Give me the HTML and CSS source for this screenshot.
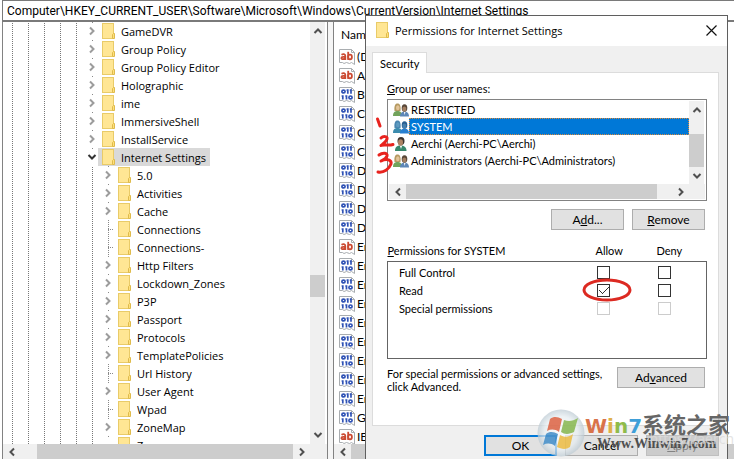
FILE: index.html
```html
<!DOCTYPE html>
<html lang="en">
<head>
    <meta charset="UTF-8">
    <meta name="viewport" content="width=device-width, initial-scale=1.0">
    <title>Registry Editor</title>
    <link rel="stylesheet" href="styles.css">
</head>
<body>

<!-- Shared icons -->
<svg class="sprite" aria-hidden="true">
    <symbol id="folder" viewBox="0 0 13 16">
        <rect x="0.5" y="0.5" width="11" height="15" fill="#ffe694" stroke="#e9cb68"/>
        <path d="M10.5 15.5V11.5l1-1h1v5z" fill="#ffe07c" stroke="#dfbb4c"/>
    </symbol>
    <symbol id="right" viewBox="0 0 8 10">
        <path d="M2 1.5L5.5 5L2 8.5" fill="none" stroke="currentColor" stroke-width="2"/>
    </symbol>
    <symbol id="left" viewBox="0 0 8 10">
        <path d="M6 1.5L2.5 5L6 8.5" fill="none" stroke="currentColor" stroke-width="2"/>
    </symbol>
    <symbol id="up" viewBox="0 0 10 8">
        <path d="M1.5 6L5 2.5L8.5 6" fill="none" stroke="currentColor" stroke-width="2"/>
    </symbol>
    <symbol id="down" viewBox="0 0 10 8">
        <path d="M1.5 2L5 5.5L8.5 2" fill="none" stroke="currentColor" stroke-width="2"/>
    </symbol>
    <symbol id="page" viewBox="0 0 16 16">
        <path d="M0.5 0.5H12.5L15.5 3.5V15.5L12.5 13.5L10.5 14.5L7.5 13.5L5 14.5L3.5 13.5H0.5Z" fill="#fff" stroke="#a9adb0"/>
        <path d="M12.5 0.5V3.5H15.5" fill="none" stroke="#a9adb0"/>
    </symbol>
    <symbol id="string" viewBox="0 0 16 16">
        <use href="#page"/>
        <g fill="none" stroke="#cb4a32" stroke-width="1.8">
            <path d="M2.5 5.8C4 4.8 6.3 4.9 6.3 7V11M6.3 7.8H4.2C1.8 7.8 1.8 10.3 4 10.2C5.5 10.2 6.3 9.2 6.3 8.5"/>
            <path d="M9.2 2.8V11"/>
            <ellipse cx="11" cy="8" rx="1.9" ry="2.3"/>
        </g>
    </symbol>
    <symbol id="binary" viewBox="0 0 16 16">
        <use href="#page"/>
        <g fill="none" stroke="#2f52b5" stroke-width="1.7">
            <ellipse cx="4.5" cy="4.5" rx="1.6" ry="1.4"/>
            <path d="M8.8 2.3V6.7M7.6 3.2h1M12 2.3V6.7M10.8 3.2h1"/>
            <path d="M3.8 8.2V12.6M2.6 9h1M7.5 8.2V12.6M6.3 9h1"/>
            <ellipse cx="11.5" cy="10.4" rx="1.6" ry="1.4"/>
        </g>
    </symbol>
    <symbol id="group" viewBox="0 0 16 14">
        <path d="M0 13C0 9 2 8 4.5 8S9 9 9 13Z" fill="#72a35b"/>
        <path d="M1.5 8C1 3 2 0.5 4.5 0.5S8 3 7.5 8Z" fill="#b59a62"/>
        <ellipse cx="4.8" cy="4.8" rx="1.8" ry="2.5" fill="#e3c499"/>
        <path d="M7 13.5C7 10 9 8.5 11.5 8.5S16 10 16 13.5Z" fill="#5d87b7"/>
        <ellipse cx="11.5" cy="5" rx="2.8" ry="3.8" fill="#594839"/>
        <ellipse cx="11.3" cy="6" rx="2" ry="2.6" fill="#a37f62"/>
        <path d="M11 9L11.5 12L12.5 9Z" fill="#fff"/>
    </symbol>
    <symbol id="group-selected" viewBox="0 0 16 14">
        <path d="M0 13C0 9 2 8 4.5 8S9 9 9 13Z" fill="#3c8cae"/>
        <path d="M1.5 8C1 3 2 0.5 4.5 0.5S8 3 7.5 8Z" fill="#4a86b0"/>
        <ellipse cx="4.8" cy="4.8" rx="1.8" ry="2.5" fill="#5f9bc0"/>
        <path d="M7 13.5C7 10 9 8.5 11.5 8.5S16 10 16 13.5Z" fill="#287fd0"/>
        <ellipse cx="11.5" cy="5" rx="2.8" ry="3.8" fill="#295f90"/>
        <ellipse cx="11.3" cy="6" rx="2" ry="2.6" fill="#4880ad"/>
    </symbol>
    <symbol id="user" viewBox="0 0 16 14">
        <path d="M2 14C2 10 4 8.5 7.5 8.5S13.5 10 13.5 14Z" fill="#37876c"/>
        <ellipse cx="8" cy="4" rx="3.5" ry="4" fill="#3d352f"/>
        <ellipse cx="7.5" cy="5.5" rx="2.5" ry="3.2" fill="#ae8465"/>
        <path d="M7 9L8 12L9 9Z" fill="#fff"/>
    </symbol>
</svg>

<div class="window">
    <input class="address" type="text" aria-label="Address" value="Computer\HKEY_CURRENT_USER\Software\Microsoft\Windows\CurrentVersion\Internet Settings">

    <div class="panes">
        <!-- Key tree -->
        <div class="pane tree-pane">
            <div class="pane-row">
                <ul class="tree">
                    <li><span class="guides"></span><span class="expander"><svg><use href="#right"/></svg></span><span class="key"><svg><use href="#folder"/></svg>GameDVR</span></li>
                    <li><span class="guides"></span><span class="expander"><svg><use href="#right"/></svg></span><span class="key"><svg><use href="#folder"/></svg>Group Policy</span></li>
                    <li><span class="guides"></span><span class="expander"><svg><use href="#right"/></svg></span><span class="key"><svg><use href="#folder"/></svg>Group Policy Editor</span></li>
                    <li><span class="guides"></span><span class="expander"><svg><use href="#right"/></svg></span><span class="key"><svg><use href="#folder"/></svg>Holographic</span></li>
                    <li><span class="guides"></span><span class="expander"><svg><use href="#right"/></svg></span><span class="key"><svg><use href="#folder"/></svg>ime</span></li>
                    <li><span class="guides"></span><span class="expander"><svg><use href="#right"/></svg></span><span class="key"><svg><use href="#folder"/></svg>ImmersiveShell</span></li>
                    <li><span class="guides"></span><span class="expander"><svg><use href="#right"/></svg></span><span class="key"><svg><use href="#folder"/></svg>InstallService</span></li>
                    <li><span class="guides"></span><span class="expander open"><svg><use href="#down"/></svg></span><span class="key selected"><svg><use href="#folder"/></svg>Internet Settings</span></li>
                    <li class="child"><span class="guides"></span><span class="expander"><svg><use href="#right"/></svg></span><span class="key"><svg><use href="#folder"/></svg>5.0</span></li>
                    <li class="child"><span class="guides"></span><span class="expander"><svg><use href="#right"/></svg></span><span class="key"><svg><use href="#folder"/></svg>Activities</span></li>
                    <li class="child"><span class="guides"></span><span class="expander"><svg><use href="#right"/></svg></span><span class="key"><svg><use href="#folder"/></svg>Cache</span></li>
                    <li class="child"><span class="guides"></span><span class="leaf"></span><span class="key"><svg><use href="#folder"/></svg>Connections</span></li>
                    <li class="child"><span class="guides"></span><span class="leaf"></span><span class="key"><svg><use href="#folder"/></svg>Connections-</span></li>
                    <li class="child"><span class="guides"></span><span class="expander"><svg><use href="#right"/></svg></span><span class="key"><svg><use href="#folder"/></svg>Http Filters</span></li>
                    <li class="child"><span class="guides"></span><span class="expander"><svg><use href="#right"/></svg></span><span class="key"><svg><use href="#folder"/></svg>Lockdown_Zones</span></li>
                    <li class="child"><span class="guides"></span><span class="expander"><svg><use href="#right"/></svg></span><span class="key"><svg><use href="#folder"/></svg>P3P</span></li>
                    <li class="child"><span class="guides"></span><span class="expander"><svg><use href="#right"/></svg></span><span class="key"><svg><use href="#folder"/></svg>Passport</span></li>
                    <li class="child"><span class="guides"></span><span class="expander"><svg><use href="#right"/></svg></span><span class="key"><svg><use href="#folder"/></svg>Protocols</span></li>
                    <li class="child"><span class="guides"></span><span class="expander"><svg><use href="#right"/></svg></span><span class="key"><svg><use href="#folder"/></svg>TemplatePolicies</span></li>
                    <li class="child"><span class="guides"></span><span class="leaf"></span><span class="key"><svg><use href="#folder"/></svg>Url History</span></li>
                    <li class="child"><span class="guides"></span><span class="expander"><svg><use href="#right"/></svg></span><span class="key"><svg><use href="#folder"/></svg>User Agent</span></li>
                    <li class="child"><span class="guides"></span><span class="leaf"></span><span class="key"><svg><use href="#folder"/></svg>Wpad</span></li>
                    <li class="child"><span class="guides"></span><span class="expander"><svg><use href="#right"/></svg></span><span class="key"><svg><use href="#folder"/></svg>ZoneMap</span></li>
                    <li class="child"><span class="guides"></span><span class="expander"></span><span class="key"><svg><use href="#folder"/></svg>Zones</span></li>
                </ul>
                <div class="scroll-v tree-scroll">
                    <button type="button" aria-label="Scroll up"><svg class="v"><use href="#up"/></svg></button>
                    <div class="track"><div class="thumb"></div></div>
                    <button type="button" aria-label="Scroll down"><svg class="v"><use href="#down"/></svg></button>
                </div>
            </div>
            <div class="scroll-h tree-scroll-h">
                <button type="button" aria-label="Scroll left"><svg><use href="#left"/></svg></button>
                <div class="thumb"></div>
                <button type="button" aria-label="Scroll right"><svg><use href="#right"/></svg></button>
            </div>
        </div>

        <!-- Values -->
        <div class="pane values-pane">
            <div class="values">
                <div class="values-head">Nam</div>
                <ul>
                    <li><svg><use href="#string"/></svg>(D</li>
                    <li><svg><use href="#string"/></svg>Ac</li>
                    <li><svg><use href="#binary"/></svg>Ba</li>
                    <li><svg><use href="#binary"/></svg>Ce</li>
                    <li><svg><use href="#binary"/></svg>Ce</li>
                    <li><svg><use href="#binary"/></svg>Ce</li>
                    <li><svg><use href="#binary"/></svg>Di</li>
                    <li><svg><use href="#binary"/></svg>Di</li>
                    <li><svg><use href="#binary"/></svg>Di</li>
                    <li><svg><use href="#binary"/></svg>Di</li>
                    <li><svg><use href="#string"/></svg>En</li>
                    <li><svg><use href="#binary"/></svg>En</li>
                    <li><svg><use href="#binary"/></svg>En</li>
                    <li><svg><use href="#binary"/></svg>En</li>
                    <li><svg><use href="#binary"/></svg>En</li>
                    <li><svg><use href="#binary"/></svg>En</li>
                    <li><svg><use href="#binary"/></svg>En</li>
                    <li><svg><use href="#binary"/></svg>En</li>
                    <li><svg><use href="#binary"/></svg>En</li>
                    <li><svg><use href="#binary"/></svg>Gl</li>
                    <li><svg><use href="#string"/></svg>IE</li>
                </ul>
            </div>
            <div class="scroll-h">
                <button type="button" aria-label="Scroll left"><svg><use href="#left"/></svg></button>
                <div class="thumb"></div>
            </div>
        </div>
    </div>
</div>

<!-- Permissions dialog -->
<form class="dialog">
    <div class="title">
        <svg class="title-icon"><use href="#folder"/></svg>
        <h1>Permissions for Internet Settings</h1>
        <button type="button" class="close" aria-label="Close">
            <svg viewBox="0 0 11 11"><path d="M0.5 0.5L10.5 10.5M10.5 0.5L0.5 10.5" stroke="#111" stroke-width="1.2"/></svg>
        </button>
    </div>
    <div class="dialog-body">
        <button type="button" class="tab">Security</button>
        <div class="panel">
            <div class="label" id="groups"><u>G</u>roup or user names:</div>
            <div class="listbox">
                <div class="list-row">
                    <ul role="listbox" aria-labelledby="groups">
                        <li role="option"><svg><use href="#group"/></svg><span>RESTRICTED</span></li>
                        <li role="option" aria-selected="true" class="selected"><svg><use href="#group-selected"/></svg><span>SYSTEM</span></li>
                        <li role="option"><svg><use href="#user"/></svg><span>Aerchi (Aerchi-PC\Aerchi)</span></li>
                        <li role="option"><svg><use href="#group"/></svg><span>Administrators (Aerchi-PC\Administrators)</span></li>
                    </ul>
                    <div class="scroll-v list-scroll">
                        <button type="button" aria-label="Scroll up"><svg class="v"><use href="#up"/></svg></button>
                        <div class="track"><div class="thumb"></div></div>
                        <button type="button" aria-label="Scroll down"><svg class="v"><use href="#down"/></svg></button>
                    </div>
                </div>
                <div class="scroll-h list-scroll-h">
                    <button type="button" aria-label="Scroll left"><svg><use href="#left"/></svg></button>
                    <div class="thumb"></div>
                    <button type="button" aria-label="Scroll right"><svg><use href="#right"/></svg></button>
                </div>
            </div>
            <div class="list-buttons">
                <button type="button" class="btn">A<u>d</u>d...</button>
                <button type="button" class="btn"><u>R</u>emove</button>
            </div>

            <table class="permissions">
                <thead>
                    <tr><th scope="col"><u>P</u>ermissions for SYSTEM</th><th scope="col">Allow</th><th scope="col">Deny</th></tr>
                </thead>
                <tbody>
                    <tr>
                        <td>Full Control</td>
                        <td><input type="checkbox" aria-label="Allow full control"></td>
                        <td><input type="checkbox" aria-label="Deny full control"></td>
                    </tr>
                    <tr>
                        <td>Read</td>
                        <td><input type="checkbox" aria-label="Allow read" checked></td>
                        <td><input type="checkbox" aria-label="Deny read"></td>
                    </tr>
                    <tr>
                        <td>Special permissions</td>
                        <td><input type="checkbox" aria-label="Allow special permissions" disabled></td>
                        <td><input type="checkbox" aria-label="Deny special permissions" disabled></td>
                    </tr>
                </tbody>
            </table>

            <div class="advanced">
                <p>For special permissions or advanced settings,<br>click Advanced.</p>
                <button type="button" class="btn wide">Ad<u>v</u>anced</button>
            </div>
        </div>
        <div class="actions">
            <button type="submit" class="btn default">OK</button>
            <button type="button" class="btn">Cancel</button>
            <button type="button" class="btn" disabled><u>A</u>pply</button>
        </div>
    </div>

    <!-- Red pen marks -->
    <svg class="marks" viewBox="0 0 22 60" aria-hidden="true">
        <g fill="none" stroke="#e8231e" stroke-width="3" stroke-linecap="round" stroke-linejoin="round">
            <path d="M3.5 4L6 11"/>
            <path d="M7 23C9 21 14 21 13 24C12 27 9 29 7 30.5C10 29 14 31 19 29.5"/>
            <path d="M5 40C9 37 14 38 13 41C12 44 9 45 7 46C13 43 18 45 17 49C15 54 10 58 4 57"/>
        </g>
    </svg>
    <svg class="circle" viewBox="0 0 50 24" aria-hidden="true">
        <ellipse cx="25" cy="12" rx="23" ry="10" fill="none" stroke="#dc2a22" stroke-width="3"/>
    </svg>
</form>

<!-- Site watermark -->
<div class="watermark">
    <svg viewBox="0 0 48 48" aria-hidden="true">
        <defs>
            <radialGradient id="orb" cx="0.5" cy="0.5" r="0.5">
                <stop offset="0" stop-color="#fff"/>
                <stop offset="0.7" stop-color="#e6edf1"/>
                <stop offset="1" stop-color="#bccad3"/>
            </radialGradient>
        </defs>
        <circle cx="24" cy="24" r="23.5" fill="url(#orb)" opacity="0.8"/>
        <path d="M13 10C17 7 21 8 25 10L22 23C18 20 14 20 10 22Z" fill="#dd6a4c"/>
        <path d="M27 11C32 13 36 12 41 9L37 23C33 25 28 26 24 23Z" fill="#8cba58"/>
        <path d="M9 25C13 22 17 23 21 25L18 37C14 34 10 34 6 36Z" fill="#4b93cb"/>
        <path d="M23 26C28 29 32 28 36 25L33 38C29 41 24 40 20 38Z" fill="#edbf4d"/>
    </svg>
    <div class="watermark-text">
        <div class="brand"><span class="latin"><span class="w">W</span><span class="i">i</span><span class="n">n</span><span class="seven">7</span></span>系统之家</div>
        <div class="site">Www.Winwin7.com</div>
    </div>
    <div class="blog">https://aerch</div>
</div>

</body>
</html>
```
FILE: styles.css
```css
* {
    box-sizing: border-box;
}

body {
    margin: 0;
    height: 100vh;
    overflow: hidden;
    position: relative;
    background-color: #ffffff;
    color: #000000;
    font-family: "Open Sans", "Segoe UI", sans-serif;
    font-size: 11px;
}

button, input {
    font: inherit;
    color: inherit;
}

ul {
    list-style: none;
    margin: 0;
    padding: 0;
}

svg {
    display: block;
    flex: none;
}

.sprite {
    position: absolute;
    width: 0;
    height: 0;
}

/* Registry window */
.window {
    display: flex;
    flex-direction: column;
    height: 100%;
    padding-left: 2px;
}

.address {
    flex: none;
    width: 100%;
    height: 22px;
    padding: 0 4px;
    border: 1px solid #7a7a7a;
    border-right: none;
    border-bottom-width: 2px;
    font-family: Roboto, sans-serif;
    font-size: 12px;
    outline: none;
}

.panes {
    display: flex;
    flex: 1;
    min-height: 0;
    gap: 5px;
    background-color: #f5f5f5;
}

.pane {
    display: flex;
    flex-direction: column;
    min-height: 0;
    background-color: #ffffff;
    border-left: 1px solid #828282;
}

.tree-pane {
    width: 326px;
    flex: none;
    border-right: 1px solid #828282;
}

.values-pane {
    flex: 1;
}

.pane-row {
    display: flex;
    flex: 1;
    min-height: 0;
}

/* Tree */
.tree {
    flex: 1;
    padding-left: 1px;
    overflow: hidden;
}

.tree li {
    display: flex;
    height: 18px;
}

.guides {
    width: 80px;
    background-image:
        linear-gradient(#ffffff 1px, transparent 1px),
        linear-gradient(90deg, transparent 8px, #777777 8px, #777777 9px, transparent 9px);
    background-size: 100% 2px, 16px 100%;
}

.child .guides {
    width: 96px;
}

.expander {
    display: flex;
    justify-content: center;
    align-items: center;
    width: 14px;
    padding-left: 2px;
    color: #9c9c9c;
    background: linear-gradient(#888888, #888888) 8px 0 / 1px 1px no-repeat;
}

.expander svg {
    width: 8px;
    height: 10px;
}

.expander.open {
    color: #333333;
}

.expander.open svg {
    width: 10px;
    height: 8px;
}

.leaf {
    width: 14px;
    background-image:
        repeating-linear-gradient(#888888 0 1px, transparent 1px 2px),
        repeating-linear-gradient(90deg, #888888 0 1px, transparent 1px 2px);
    background-position: 8px 0, 8px 9px;
    background-size: 1px 100%, 6px 1px;
    background-repeat: no-repeat;
}

.key {
    display: flex;
    align-items: center;
    gap: 6px;
    padding: 0 4px;
    white-space: nowrap;
}

.key svg {
    width: 13px;
    height: 16px;
}

.key.selected {
    background-color: #d9d9d9;
}

/* Scroll bars */
.scroll-v, .scroll-h {
    display: flex;
    flex: none;
    background-color: #f0f0f0;
    color: #505050;
}

.scroll-v {
    flex-direction: column;
    width: 15px;
}

.scroll-h {
    height: 15px;
}

.scroll-v button, .scroll-h button {
    display: flex;
    flex: none;
    justify-content: center;
    align-items: center;
    width: 15px;
    height: 15px;
    padding: 0;
    border: none;
    background: none;
}

.scroll-v svg, .scroll-h svg {
    width: 8px;
    height: 10px;
}

.scroll-v svg.v {
    width: 10px;
    height: 8px;
}

.scroll-v button {
    height: 18px;
}

.scroll-h button {
    width: 17px;
}

.track {
    display: flex;
    flex: 1;
    flex-direction: column;
    justify-content: flex-end;
}

.thumb {
    background-color: #cdcdcd;
}

.scroll-h .thumb {
    flex: 1;
}

.tree-scroll {
    margin-right: 2px;
}

.tree-scroll .thumb {
    height: 22px;
    margin-bottom: 129px;
}

.tree-scroll-h {
    padding-right: 17px;
}

.tree-scroll-h button:first-child {
    margin-right: 17px;
}

/* Values */
.values {
    flex: 1;
    min-height: 0;
    overflow: hidden;
    font-family: Lato, sans-serif;
    font-size: 12px;
}

.values-head {
    height: 25px;
    padding-left: 7px;
    line-height: 26px;
}

.values li {
    display: flex;
    align-items: center;
    gap: 2px;
    height: 19px;
    padding-left: 5px;
}

.values svg {
    width: 16px;
    height: 16px;
}

/* Dialog */
.dialog {
    position: absolute;
    top: 15px;
    bottom: 0;
    left: 365px;
    width: 363px;
    background-color: #f0f0f0;
    border: 1px solid #5f5f5f;
    border-bottom: none;
    font-family: Lato, sans-serif;
}

.title {
    display: flex;
    align-items: center;
    gap: 6px;
    height: 30px;
    padding: 0 10px 2px;
    background-color: #ffffff;
}

.title-icon {
    width: 13px;
    height: 16px;
}

h1 {
    flex: 1;
    margin: 0;
    font-family: "Open Sans", sans-serif;
    font-size: 11px;
    font-weight: normal;
}

.close {
    padding: 0;
    border: none;
    background: none;
}

.close svg {
    width: 11px;
    height: 11px;
}

.dialog-body {
    padding: 6px 8px 0 6px;
}

.tab {
    display: block;
    position: relative;
    height: 21px;
    margin-bottom: -1px;
    padding: 0 7px;
    background-color: #ffffff;
    border: 1px solid #dcdcdc;
    border-bottom: none;
}

.panel {
    height: 354px;
    padding: 7px 11px 0 14px;
    background-color: #ffffff;
    border: 1px solid #dcdcdc;
}

.label {
    height: 19px;
    line-height: 18px;
}

.listbox {
    padding: 1px;
    border: 1px solid #828282;
}

.list-row {
    display: flex;
}

.list-row ul {
    flex: 1;
    height: 83px;
}

.list-row li {
    display: flex;
    align-items: center;
    height: 17px;
    padding-left: 4px;
}

.list-row li svg {
    width: 16px;
    height: 14px;
}

.list-row li span {
    flex: 1;
    padding-left: 2px;
    line-height: 17px;
}

.list-row .selected span {
    background-color: #0078d7;
    color: #ffffff;
    outline: 1px dotted #d98a3d;
    outline-offset: -1px;
}

.list-scroll {
    margin-right: 1px;
}

.list-scroll button {
    height: 17px;
}

.list-scroll .thumb {
    height: 33px;
}

.list-scroll-h button:last-child {
    width: 48px;
}

.list-buttons {
    display: flex;
    justify-content: flex-end;
    gap: 8px;
    margin: 8px 2px 11px 0;
}

.btn {
    width: 73px;
    height: 21px;
    padding: 0;
    background-color: #e1e1e1;
    border: 1px solid #adadad;
    font-size: 12px;
    line-height: 17px;
}

.btn.wide {
    width: 88px;
}

.btn.default {
    border: 2px solid #0078d7;
}

.btn:disabled {
    background-color: #cccccc;
    border-color: #bfbfbf;
    color: #838383;
}

/* Permissions table */
.permissions {
    width: 100%;
    table-layout: fixed;
    border-collapse: collapse;
}

.permissions th {
    height: 20px;
    padding: 0;
    font-weight: normal;
    text-align: left;
}

.permissions th:nth-child(2) {
    width: 61px;
}

.permissions th:nth-child(3) {
    width: 50px;
}

.permissions tbody {
    border: 1px solid #646464;
}

.permissions td {
    height: 18px;
    padding: 0;
    vertical-align: middle;
}

.permissions td:first-child {
    padding-left: 11px;
}

.permissions tr:first-child td {
    height: 20px;
    padding-top: 2px;
}

.permissions tr:last-child td {
    height: 59px;
    padding-bottom: 40px;
}

.permissions input {
    display: block;
    appearance: none;
    width: 13px;
    height: 13px;
    margin: 0 1px;
    background-color: #ffffff;
    border: 1px solid #333333;
}

.permissions input:checked {
    background-image:
        linear-gradient(45deg, transparent 42%, #333333 42% 58%, transparent 58%),
        linear-gradient(-45deg, transparent 44%, #333333 44% 56%, transparent 56%);
    background-size: 4px 4px, 7px 7px;
    background-position: 1px 5px, 4px 2px;
    background-repeat: no-repeat;
}

.permissions input:disabled {
    border-color: #cccccc;
}

.advanced {
    display: flex;
    justify-content: space-between;
    align-items: flex-start;
    margin: 8px 2px 0 0;
}

.advanced p {
    margin: 0;
    line-height: 13px;
    white-space: nowrap;
}

.actions {
    display: flex;
    justify-content: flex-end;
    gap: 8px;
    margin-top: 9px;
}

/* Pen marks */
.marks {
    position: absolute;
    top: 99px;
    left: 8px;
    width: 22px;
    height: 60px;
}

.circle {
    position: absolute;
    top: 262px;
    left: 216px;
    width: 50px;
    height: 24px;
}

/* Watermark */
.watermark {
    position: absolute;
    top: 409px;
    left: 537px;
    display: flex;
    width: 197px;
    color: #666666;
}

.watermark > svg {
    width: 48px;
    height: 48px;
    opacity: 0.9;
}

.brand {
    height: 28px;
    font-family: "Noto Sans CJK SC", sans-serif;
    font-size: 22px;
    font-weight: bold;
    line-height: 28px;
    white-space: nowrap;
}

.latin {
    font-family: "DejaVu Sans", sans-serif;
    font-size: 20px;
}

.w {
    color: #d9734a;
}

.i {
    color: #e0b048;
}

.n {
    color: #8fbb4a;
}

.seven {
    color: #3f9fd8;
}

.site {
    padding-left: 12px;
    color: #505050;
    font-family: "Liberation Serif", serif;
    font-size: 14px;
    font-weight: bold;
    line-height: 14px;
}

.blog {
    position: absolute;
    top: 20px;
    right: 0;
    color: #dddddd;
    font-size: 14px;
    opacity: 0.8;
}
```
